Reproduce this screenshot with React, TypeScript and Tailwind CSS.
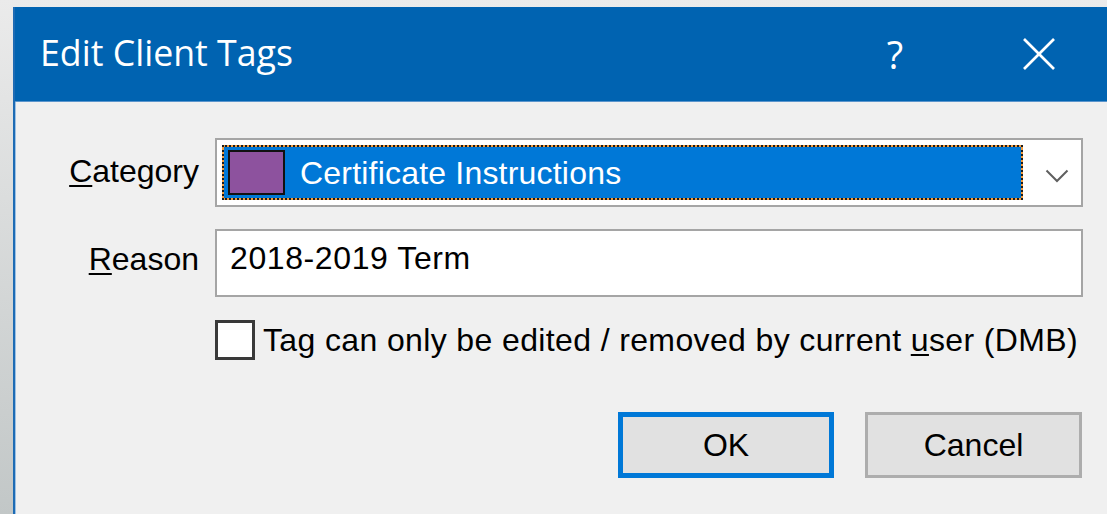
import React from "react";

const ui = "font-['Liberation_Sans',Arial,sans-serif]";

function Chevron() {
  return (
    <svg width="24" height="14" viewBox="0 0 24 14" fill="none">
      <polyline points="1.5,1.5 12,12 22.5,1.5" stroke="#5f5f5f" strokeWidth="2" />
    </svg>
  );
}

function CloseGlyph() {
  return (
    <svg width="32" height="32" viewBox="0 0 32 32" fill="none">
      <line x1="1" y1="1" x2="31" y2="31" stroke="#ffffff" strokeWidth="2.6" />
      <line x1="31" y1="1" x2="1" y2="31" stroke="#ffffff" strokeWidth="2.6" />
    </svg>
  );
}

export default function App() {
  return (
    <div className="w-[1107px] h-[514px] overflow-hidden bg-gradient-to-b from-[#ebebeb] to-[#c2c7c7] pt-[7px] pl-[13px]">
      <div className="w-[1098px] h-[520px] flex flex-col border-l-2 border-[#1d6bb4] bg-[#f0f0f0]">
        {/* caption bar */}
        <div className="h-[95px] shrink-0 flex items-center bg-[#0063b1] border-b border-[#5b95cc]">
          <div className="pl-[25px] flex-1 pb-[2px] text-white text-[35.7px] leading-none font-['Open_Sans','Noto_Sans',sans-serif]">
            Edit Client Tags
          </div>
          <div className="w-[144px] h-full flex items-center justify-center text-white text-[38px] leading-none font-['Open_Sans','Noto_Sans',sans-serif]">
            ?
          </div>
          <div className="w-[144px] h-full flex items-center justify-center">
            <CloseGlyph />
          </div>
        </div>

        {/* dialog body */}
        <div className={`flex-1 border-l border-[#9dc1e4] pt-[36px] text-black text-[32px] leading-none ${ui}`}>
          <div className="w-[1067px] flex flex-col">
            {/* category row */}
            <div className="flex items-start gap-[16px]">
              <div className="w-[183px] pt-[17px] text-right">
                <span className="underline decoration-2 underline-offset-[3px]">C</span>ategory
              </div>
              <div className="w-[868px] h-[69px] flex items-center border-2 border-[#a5a5a5] bg-white p-[5px]">
                <div className="w-[801px] h-[55px] bg-[#f39b3c]">
                  <div className="w-full h-full flex items-center border-2 border-dotted border-[#1b1b1b] bg-[#0078d7] bg-clip-padding pl-[4px]">
                    <div className="w-[57px] h-[45px] border-2 border-[#111] bg-[#8d529e]" />
                    <span className="ml-[15px] text-white tracking-[0.2px]">Certificate Instructions</span>
                  </div>
                </div>
                <div className="ml-[22px] mt-[6px]">
                  <Chevron />
                </div>
              </div>
            </div>

            {/* reason row */}
            <div className="flex items-start gap-[16px] mt-[22px]">
              <div className="w-[183px] pt-[14px] text-right">
                <span className="underline decoration-2 underline-offset-[3px]">R</span>eason
              </div>
              <div className="w-[868px] h-[68px] border-2 border-[#a5a5a5] bg-white pl-[13px] pt-[11px] tracking-[0.6px]">
                2018-2019 Term
              </div>
            </div>

            {/* ownership checkbox */}
            <div className="flex items-center gap-[8px] mt-[23px] pl-[199px]">
              <div className="w-[40px] h-[40px] border-[3px] border-[#3a3a3a] bg-white" />
              <span className="tracking-[0.37px]">
                Tag can only be edited / removed by current{" "}
                <span className="underline decoration-2 underline-offset-[3px]">u</span>ser (DMB)
              </span>
            </div>

            {/* buttons */}
            <div className="flex justify-end gap-[31px] mt-[52px] pr-[1px]">
              <button className="w-[216px] h-[66px] flex items-center justify-center border-[5px] border-[#0078d7] bg-[#e1e1e1]">
                OK
              </button>
              <button className="w-[217px] h-[66px] flex items-center justify-center border-[3px] border-[#adadad] bg-[#e1e1e1]">
                Cancel
              </button>
            </div>
          </div>
        </div>
      </div>
    </div>
  );
}
